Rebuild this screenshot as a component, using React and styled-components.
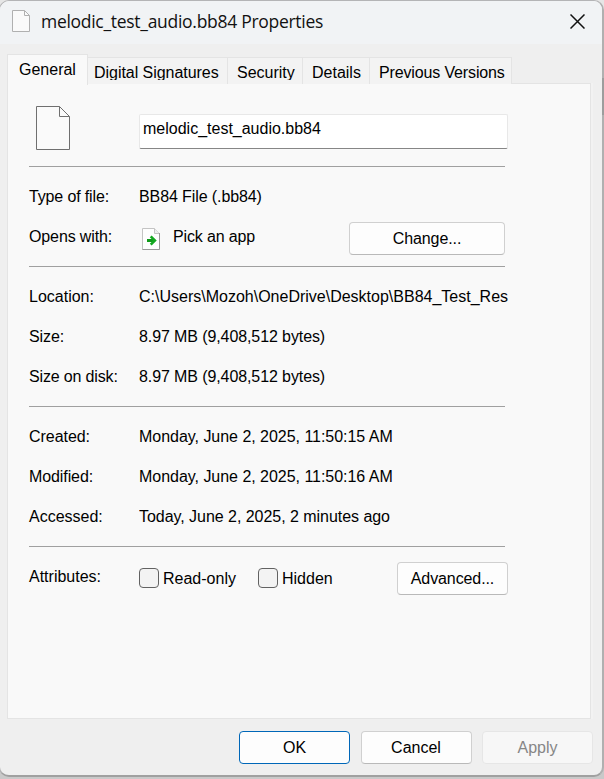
import React from "react";
import styled, { createGlobalStyle } from "styled-components";

const GlobalStyle = createGlobalStyle`
  *, *::before, *::after { box-sizing: border-box; }
  html, body { margin: 0; padding: 0; }
  body { background: #c9c9c9; overflow: hidden; }
`;

const Backdrop = styled.div`
  position: relative;
  width: 604px;
  height: 779px;
  overflow: hidden;
  background: linear-gradient(#e6e6e6 0 77px, #c9c9c9 115px);
`;

const EdgeShade = styled.div`
  position: absolute;
  top: 78px;
  right: 0;
  width: 2px;
  height: 37px;
  background: #9d9d9d;
`;

const Dialog = styled.main`
  display: flex;
  flex-direction: column;
  width: 605px;
  height: 777px;
  margin-left: -1px;
  border: 1px solid #b4b4b6;
  border-right: 2px solid #b0b0b0;
  border-bottom: 2px solid #a0a0a0;
  border-radius: 10px;
  overflow: hidden;
  background: #efefef;
  color: #000;
  font-family: "Liberation Sans", Arial, sans-serif;
  font-size: 16px;
  line-height: 20px;
  white-space: nowrap;
`;

const TitleBar = styled.header`
  display: flex;
  align-items: center;
  flex: 0 0 43px;
  padding: 0 17px 0 12px;
  background: #f1f3f5;
`;

const FileMark = styled.span`
  display: flex;
  margin-top: -3px;
`;

const Title = styled.h1`
  flex: 1;
  margin: -4px 0 0 11px;
  font: 400 17.5px/24px "Open Sans", "Noto Sans", sans-serif;
  letter-spacing: -0.29px;
  color: #111;
`;

const CloseButton = styled.button`
  display: flex;
  margin-top: -2px;
  padding: 0;
  border: 0;
  background: none;
`;

const TabList = styled.nav`
  display: flex;
  align-items: flex-end;
  height: 40px;
  flex: none;
  padding: 0 0 0 7px;
`;

const Tab = styled.button`
  display: block;
  position: relative;
  z-index: 1;
  width: ${(p) => p.$width}px;
  height: ${(p) => (p.$active ? 31 : 27)}px;
  margin-bottom: ${(p) => (p.$active ? -1 : 0)}px;
  padding: 0 0 ${(p) => (p.$active ? 1 : 0)}px ${(p) => p.$inset}px;
  border: 1px solid #e4e4e4;
  border-left-width: ${(p) => (p.$active ? 1 : 0)}px;
  border-bottom-width: 0;
  background: ${(p) => (p.$active ? "#f9f9f9" : "#f3f3f3")};
  color: inherit;
  font: inherit;
  text-align: left;
`;

const TabLabel = styled.span`
  display: block;
  height: ${(p) => (p.$active ? 20 : 17)}px;
  margin-top: ${(p) => (p.$active ? 0 : 1)}px;
  overflow: hidden;
  letter-spacing: ${(p) => p.$track || 0}px;
`;

const Panel = styled.section`
  flex: none;
  width: 584px;
  height: 636px;
  margin: -1px 0 0 7px;
  padding-left: 21px;
  border: 1px solid #e4e4e4;
  background: #f9f9f9;
  box-shadow: 2px 0 0 #f2f2f2;
`;

const FileHeader = styled.div`
  display: grid;
  grid-template-columns: 110px 369px;
  align-items: start;
  height: 82px;
`;

const FileIconBox = styled.div`
  padding: 22px 0 0 7px;
`;

const NameInput = styled.input`
  width: 369px;
  height: 35px;
  margin-top: 30px;
  padding: 0 3px 6px;
  border: 1px solid #e8e8e8;
  border-bottom-color: #868686;
  border-radius: 2px;
  outline: 0;
  background: #fff;
  color: #000;
  font: inherit;
`;

const Section = styled.div`
  width: 476px;
  padding: 10px 0 9px;
  border-top: 1px solid #a0a0a0;
`;

const Row = styled.div`
  display: grid;
  grid-template-columns: 110px 369px;
  align-items: center;
  height: 40px;
`;

const Label = styled.span`
  letter-spacing: ${(p) => p.$track || 0}px;
`;

const Value = styled.span`
  width: 370px;
  overflow: hidden;
  letter-spacing: ${(p) => p.$track || 0}px;
`;

const Controls = styled.div`
  display: flex;
  align-items: center;
  width: ${(p) => p.$width}px;
  height: 33px;
  margin-top: 3px;
  padding-left: ${(p) => p.$inset || 0}px;
`;

const AppName = styled.span`
  margin: -3px auto 0 13px;
  letter-spacing: -0.15px;
`;

const Checkbox = styled.label`
  display: flex;
  align-items: center;
  gap: 4px;
  width: ${(p) => p.$width || "auto"};
  margin-right: ${(p) => (p.$last ? "auto" : 0)};
`;

const Box = styled.input`
  appearance: none;
  width: 20px;
  height: 20px;
  margin: -1px 0 0;
  border: 1px solid #626262;
  border-radius: 4px;
  background: #f3f3f3;
`;

const Button = styled.button`
  width: ${(p) => p.$width || 111}px;
  height: 33px;
  padding: 0;
  border: 1px solid ${(p) => (p.$primary ? "#0067b8" : p.disabled ? "#e6e6e6" : "#d0d0d0")};
  border-bottom-color: ${(p) => (p.$primary ? "#0067b8" : p.disabled ? "#e6e6e6" : "#b9b9b9")};
  border-radius: 4px;
  background: ${(p) => (p.disabled ? "#f7f7f7" : "#fdfdfd")};
  color: ${(p) => (p.disabled ? "#868686" : "#000")};
  font: inherit;
  letter-spacing: ${(p) => p.$track || 0}px;
`;

const Footer = styled.footer`
  display: flex;
  justify-content: flex-end;
  gap: 10.5px;
  padding: 12px 9px 0 0;
`;

const SmallFile = () => (
  <svg width="18" height="22" viewBox="0 0 18 22">
    <path d="M.5.5h12l5 5v16H.5z" fill="#fafafa" stroke="#b0b0b0" />
    <path d="M12.5.5v5h5" fill="none" stroke="#b0b0b0" />
  </svg>
);

const LargeFile = () => (
  <svg width="34" height="44" viewBox="0 0 34 44">
    <path d="M.5.5h23l10 10v33H.5z" fill="#fafafa" stroke="#6f6f6f" />
    <path d="M23.5.5v10h10" fill="none" stroke="#6f6f6f" />
  </svg>
);

const AppIcon = () => (
  <svg width="18" height="22" viewBox="0 0 18 22">
    <path d="M.5.5h12l5 5v16H.5z" fill="#fefefe" stroke="#c4c4c4" />
    <path d="M12.5.5v5h5" fill="#eee" stroke="#c4c4c4" />
    <path d="M17.5 5v16.5H.5" fill="none" stroke="#999" />
    <path d="M5 12.5h8" stroke="#0f9a1a" strokeWidth="2.8" />
    <path d="M8.7 8.3l4.2 4.2-4.2 4.2" fill="none" stroke="#14a821" strokeWidth="2.6" />
  </svg>
);

const CloseIcon = () => (
  <svg width="15" height="15" viewBox="0 0 15 15">
    <path d="M.5.5l14 14M14.5.5l-14 14" stroke="#111" strokeWidth="1.5" />
  </svg>
);

const tabs = [
  { name: "General", width: 81, inset: 11, active: true },
  { name: "Digital Signatures", width: 140, inset: 6, track: -0.04 },
  { name: "Security", width: 75, inset: 9 },
  { name: "Details", width: 67, inset: 9 },
  { name: "Previous Versions", width: 142, inset: 9, track: -0.14 },
];

const fileSize = [
  { label: "Location:", value: "C:\\Users\\Mozoh\\OneDrive\\Desktop\\BB84_Test_Res" },
  { label: "Size:", value: "8.97 MB (9,408,512 bytes)", labelTrack: -0.1, track: -0.1 },
  { label: "Size on disk:", value: "8.97 MB (9,408,512 bytes)", labelTrack: -0.15, track: -0.1 },
];

const dates = [
  { label: "Created:", value: "Monday, June 2, 2025, 11:50:15 AM", labelTrack: -0.05, track: -0.03 },
  { label: "Modified:", value: "Monday, June 2, 2025, 11:50:16 AM", labelTrack: -0.1, track: -0.03 },
  { label: "Accessed:", value: "Today, June 2, 2025, 2 minutes ago", track: -0.04 },
];

const PropertyRow = ({ label, value, labelTrack, track }) => (
  <Row>
    <Label $track={labelTrack}>{label}</Label>
    <Value $track={track}>{value}</Value>
  </Row>
);

export default function App() {
  return (
    <Backdrop>
      <GlobalStyle />
      <Dialog>
        <TitleBar>
          <FileMark>
            <SmallFile />
          </FileMark>
          <Title>melodic_test_audio.bb84 Properties</Title>
          <CloseButton aria-label="Close">
            <CloseIcon />
          </CloseButton>
        </TitleBar>
        <TabList>
          {tabs.map((t) => (
            <Tab key={t.name} $width={t.width} $inset={t.inset} $active={t.active}>
              <TabLabel $active={t.active} $track={t.track}>
                {t.name}
              </TabLabel>
            </Tab>
          ))}
        </TabList>
        <Panel>
          <FileHeader>
            <FileIconBox>
              <LargeFile />
            </FileIconBox>
            <NameInput aria-label="File name" defaultValue="melodic_test_audio.bb84" />
          </FileHeader>
          <Section>
            <PropertyRow
              label="Type of file:"
              value="BB84 File (.bb84)"
              labelTrack={-0.14}
              track={-0.1}
            />
            <Row>
              <Label $track={-0.12}>Opens with:</Label>
              <Controls $width={366} $inset={3}>
                <AppIcon />
                <AppName>Pick an app</AppName>
                <Button $width={156} $track={-0.1}>
                  Change...
                </Button>
              </Controls>
            </Row>
          </Section>
          <Section>
            {fileSize.map((row) => (
              <PropertyRow key={row.label} {...row} />
            ))}
          </Section>
          <Section>
            {dates.map((row) => (
              <PropertyRow key={row.label} {...row} />
            ))}
          </Section>
          <Section>
            <Row>
              <Label>Attributes:</Label>
              <Controls $width={369}>
                <Checkbox $width="119px">
                  <Box type="checkbox" />
                  Read-only
                </Checkbox>
                <Checkbox $last>
                  <Box type="checkbox" />
                  Hidden
                </Checkbox>
                <Button $track={-0.1}>Advanced...</Button>
              </Controls>
            </Row>
          </Section>
        </Panel>
        <Footer>
          <Button $primary>OK</Button>
          <Button>Cancel</Button>
          <Button disabled>Apply</Button>
        </Footer>
      </Dialog>
      <EdgeShade />
    </Backdrop>
  );
}
